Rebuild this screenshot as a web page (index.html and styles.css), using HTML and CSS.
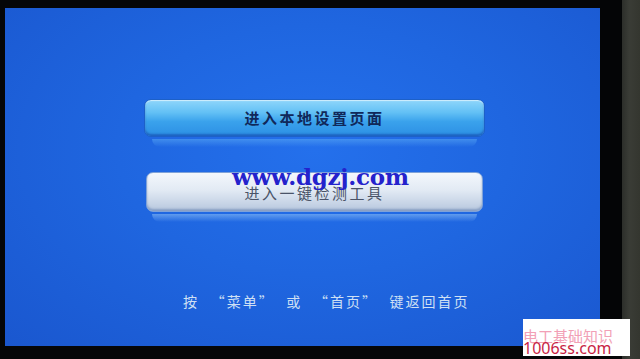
FILE: index.html
```html
<!DOCTYPE html>
<html lang="zh">
<head>
<meta charset="utf-8">
<link rel="stylesheet" href="styles.css">
</head>
<body>
<div class="room">
  <div class="tv">
    <div class="screen">
      <div class="menu">
        <div class="btn btn-active"><span>进入本地设置页面</span></div>
        <div class="reflect reflect-blue"></div>
        <div class="btn btn-light"><span>进入一键检测工具</span></div>
        <div class="reflect reflect-light"></div>
      </div>
      <div class="hint">按 “菜单” 或 “首页” 键返回首页</div>
      <div class="mark">www.dgzj.com</div>
    </div>
    <div class="bezel"></div>
    <div class="wall"></div>
  </div>
  <div class="corner">
    <div class="corner-top">电工基础知识</div>
    <div class="corner-bottom">1006ss.com</div>
  </div>
</div>
</body>
</html>
```

FILE: styles.css
```css
html, body {
  margin: 0;
  padding: 0;
  width: 640px;
  height: 359px;
  overflow: hidden;
  background: #050608;
  font-family: "Noto Sans CJK SC", "Noto Sans", sans-serif;
}
.room {
  position: relative;
  width: 640px;
  height: 359px;
}
.tv {
  display: flex;
  height: 359px;
}
.screen {
  position: relative;
  margin: 8px 0 0 5px;
  width: 595px;
  height: 338px;
  background: radial-gradient(ellipse at 52% 42%, #2470ec 0%, #1f66e0 45%, #1a57cf 100%);
  display: flex;
  flex-direction: column;
}
.menu {
  display: flex;
  flex-direction: column;
  margin: 91px 0 0 139px;
  width: 341px;
}
.btn {
  height: 36px;
  border-radius: 7px;
  display: flex;
  align-items: center;
  justify-content: center;
  font-size: 15px;
  line-height: 1;
  letter-spacing: 2.5px;
}
.btn-active {
  background: linear-gradient(#8fd6fb 0%, #62c0f5 35%, #3aa2ec 60%, #2c8fe4 100%);
  border: 1px solid #1d60c8;
  box-shadow: inset 0 -2px 2px rgba(20, 70, 170, 0.6), inset 0 1px 1px rgba(255,255,255,0.6);
  color: #10285a;
  font-weight: 700;
}
.btn-active span { margin-bottom: 2px; }
.btn-light {
  height: 38px;
  margin: 0 2px;
  background: linear-gradient(#f3f7fc 0%, #e2eaf4 45%, #c7d4e6 80%, #b6c6de 100%);
  border: 1px solid #7fa2d8;
  box-shadow: inset 0 -2px 2px rgba(90, 120, 170, 0.5);
  color: #4a5468;
}
.reflect {
  height: 8px;
  margin: 2px 8px 0;
  border-radius: 0 0 8px 8px;
}
.reflect-blue {
  background: linear-gradient(rgba(90, 170, 245, 0.55), rgba(40, 110, 225, 0));
  margin-bottom: 25px;
}
.reflect-light {
  background: linear-gradient(rgba(140, 190, 245, 0.6), rgba(40, 110, 225, 0));
}
.hint {
  margin: 69px 0 0 178px;
  font-size: 14px;
  color: #cfe0f4;
  letter-spacing: 2px;
  word-spacing: 6.5px;
}
.mark {
  position: absolute;
  left: 227px;
  top: 155px;
  font-family: "DejaVu Serif", "Liberation Serif", serif;
  font-weight: 700;
  font-size: 23px;
  color: #2422cc;
  letter-spacing: -0.3px;
}
.bezel {
  width: 22px;
  background: #040506;
}
.wall {
  flex: 1;
  background: linear-gradient(90deg, #2c2e2a, #3a3c36 40%, #34362f);
}
.corner {
  position: absolute;
  left: 523px;
  top: 319px;
  width: 107px;
  height: 37px;
  background: #ffffff;
  font-family: "Noto Sans CJK SC", "Noto Sans", sans-serif;
  line-height: 1;
}
.corner-top {
  font-size: 15px;
  line-height: 13px;
  color: #f2a0b6;
  margin: 10px 0 0 0;
}
.corner-bottom {
  font-family: "Noto Sans", sans-serif;
  font-size: 16px;
  color: #c81e44;
  line-height: 13px;
}
```
